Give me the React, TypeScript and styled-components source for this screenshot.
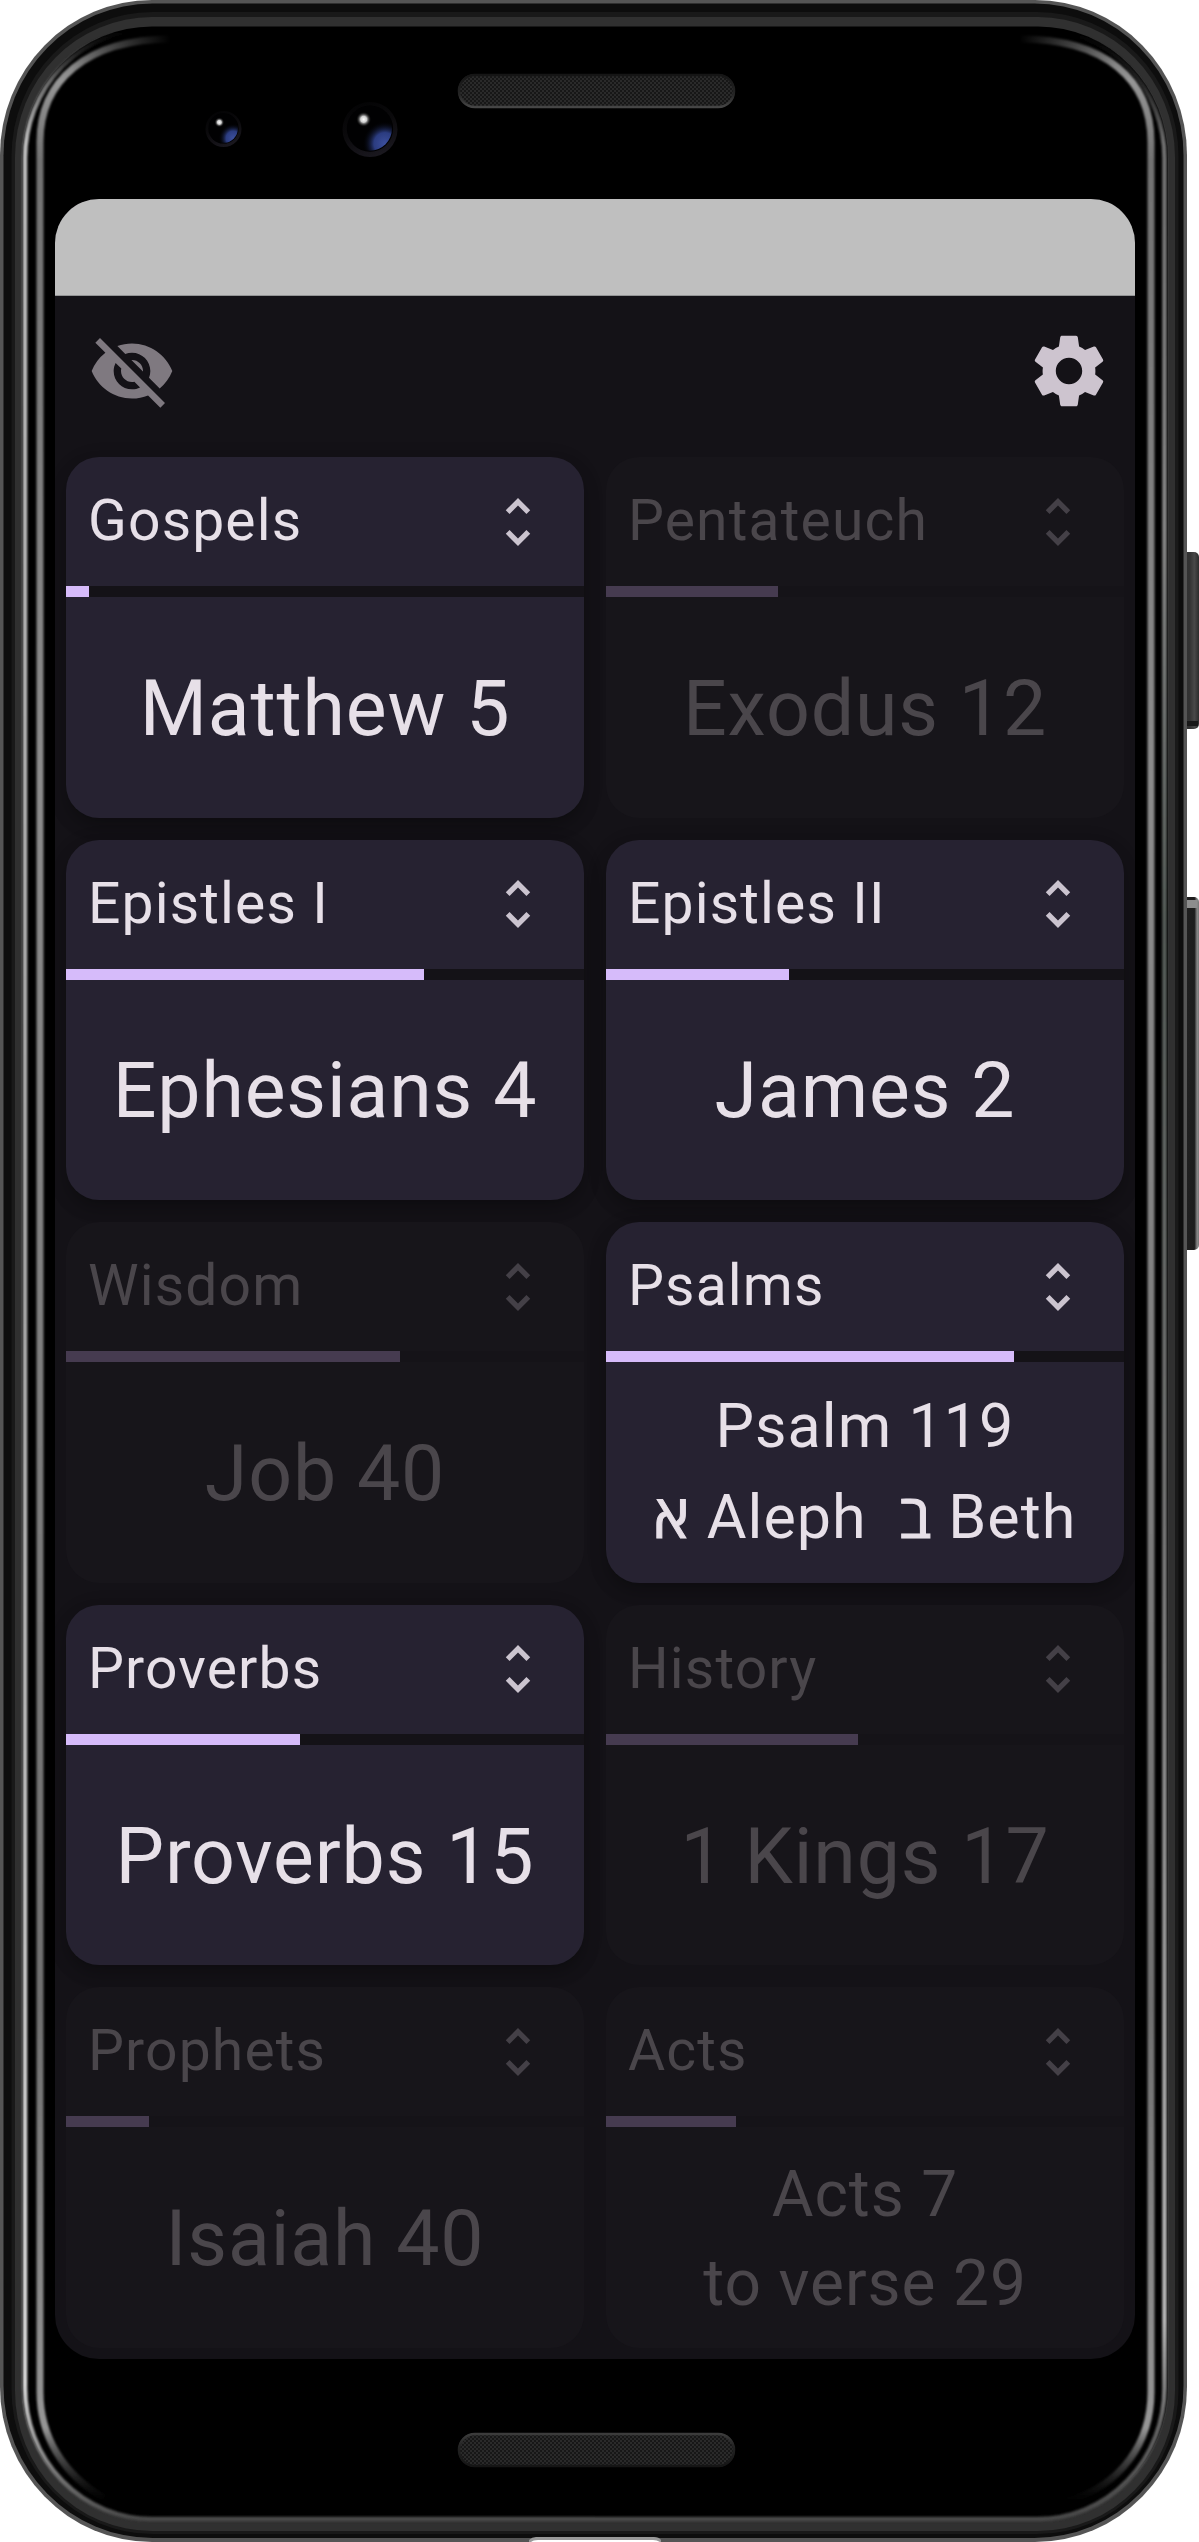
import React from "react";
import styled, { createGlobalStyle, css } from "styled-components";
import { MdSettings, MdUnfoldMore, MdVisibilityOff } from "react-icons/md";

const GlobalStyle = createGlobalStyle`
  html, body { margin: 0; padding: 0; background: #fff; }
  * { box-sizing: border-box; }
`;

const Device = styled.div`
  position: relative;
  width: 1199px;
  height: 2542px;
  padding: 199px 64px 183px 55px;
  overflow: hidden;
  font-family: Roboto, "Open Sans", "Liberation Sans", sans-serif;
`;

const Shell = styled.svg`
  position: absolute;
  inset: 0;
  width: 1199px;
  height: 2542px;
`;

const Screen = styled.main`
  position: relative;
  display: flex;
  flex-direction: column;
  width: 1080px;
  height: 2160px;
  border-radius: 44px;
  overflow: hidden;
  background: #141217;
`;

const StatusBar = styled.div`
  flex: none;
  height: 97px;
  background: #bfbfbf;
  border-bottom: 1px solid #939495;
`;

const AppBar = styled.header`
  flex: none;
  display: flex;
  align-items: center;
  justify-content: space-between;
  height: 150px;
  padding: 0 22px 0 33px;
`;

const IconButton = styled.button<{ $muted?: boolean }>`
  display: flex;
  padding: 0;
  border: 0;
  background: none;
  color: ${(p) => (p.$muted ? "#7f7980" : "#cdc4cf")};
  svg { width: 88px; height: 88px; }
`;

const Grid = styled.section`
  flex: 1;
  display: grid;
  grid-template-columns: 1fr 1fr;
  grid-template-rows: repeat(5, 1fr);
  gap: 22px;
  padding: 11px;
`;

const Card = styled.article<{ $done: boolean }>`
  display: flex;
  flex-direction: column;
  min-height: 0;
  border-radius: 33px;
  overflow: hidden;
  ${(p) =>
    p.$done
      ? css`
          background: #17151a;
          color: #4a464b;
          --icon: #444047;
          --bar: #463b50;
          --track: #151318;
        `
      : css`
          background: #262231;
          color: #e7e0e8;
          --icon: #cbc4cf;
          --bar: #d6bbfa;
          --track: #141217;
          box-shadow: 0 9px 16px rgba(0, 0, 0, 0.24), 0 4px 22px rgba(0, 0, 0, 0.1);
        `}
`;

const CardHeader = styled.div`
  flex: none;
  display: flex;
  align-items: center;
  justify-content: space-between;
  height: 129px;
  padding: 0 34px 0 22px;
  svg { width: 64px; height: 64px; color: var(--icon); }
`;

const CardTitle = styled.h2`
  margin: 0;
  padding-bottom: 1px;
  font-size: 57px;
  font-weight: 400;
  line-height: 84px;
  letter-spacing: 1.15px;
`;

const Track = styled.div`
  flex: none;
  height: 11px;
  background: var(--track);
`;

const Fill = styled.div`
  height: 100%;
  background: var(--bar);
`;

type ReadingSize = "large" | "medium" | "small";

const readingSizes = {
  large: css`
    padding-top: 3px;
    font-size: 77px;
    line-height: 116px;
    letter-spacing: 0.85px;
  `,
  medium: css`
    padding-top: 3px;
    font-size: 64px;
    line-height: 89px;
    letter-spacing: 0.9px;
  `,
  small: css`
    font-size: 61px;
    line-height: 91px;
    letter-spacing: 1.05px;
  `,
};

const Reading = styled.div<{ $size: ReadingSize }>`
  flex: 1;
  display: flex;
  flex-direction: column;
  align-items: center;
  justify-content: center;
  white-space: pre;
  ${(p) => readingSizes[p.$size]}
`;

const Line = styled.span`
  display: block;
`;

const Hebrew = styled.span`
  -webkit-text-stroke: 1px currentColor;
`;

type Plan = {
  title: string;
  lines: React.ReactNode[];
  progress: number;
  size?: ReadingSize;
  done?: boolean;
};

const plans: Plan[] = [
  { title: "Gospels", lines: ["Matthew 5"], progress: 0.045 },
  { title: "Pentateuch", lines: ["Exodus 12"], progress: 0.3316, done: true },
  { title: "Epistles I", lines: ["Ephesians 4"], progress: 0.692 },
  { title: "Epistles II", lines: ["James 2"], progress: 0.354 },
  { title: "Wisdom", lines: ["Job 40"], progress: 0.645, done: true },
  {
    title: "Psalms",
    lines: [
      "Psalm 119",
      <>
        <Hebrew>א</Hebrew> Aleph{"  "}
        <Hebrew>ב</Hebrew> Beth
      </>,
    ],
    progress: 0.7867,
    size: "small",
  },
  { title: "Proverbs", lines: ["Proverbs 15"], progress: 0.4516 },
  { title: "History", lines: ["1 Kings 17"], progress: 0.486, done: true },
  { title: "Prophets", lines: ["Isaiah 40"], progress: 0.16, done: true },
  { title: "Acts", lines: ["Acts 7", "to verse 29"], progress: 0.25, size: "medium", done: true },
];

function PlanCard({ plan }: { plan: Plan }) {
  return (
    <Card $done={!!plan.done}>
      <CardHeader>
        <CardTitle>{plan.title}</CardTitle>
        <MdUnfoldMore />
      </CardHeader>
      <Track>
        <Fill style={{ width: `${plan.progress * 100}%` }} />
      </Track>
      <Reading $size={plan.size ?? "large"}>
        {plan.lines.map((line, i) => (
          <Line key={i}>{line}</Line>
        ))}
      </Reading>
    </Card>
  );
}

function Lens({ cx, cy, r }: { cx: number; cy: number; r: number }) {
  return (
    <g>
      <circle cx={cx} cy={cy} r={r} fill="url(#ring)" />
      <circle cx={cx} cy={cy - r * 0.03} r={r * 0.84} fill="#010102" />
      <circle cx={cx} cy={cy - r * 0.03} r={r * 0.8} fill="url(#lens)" />
      <circle cx={cx - r * 0.23} cy={cy - r * 0.37} r={r * 0.28} fill="url(#glint)" />
    </g>
  );
}

function Phone() {
  return (
    <Shell viewBox="0 0 1199 2542" aria-hidden="true">
      <defs>
        <linearGradient id="ring" x1="0.2" y1="0" x2="0.6" y2="1">
          <stop offset="0" stopColor="#030304" />
          <stop offset="0.5" stopColor="#0b0a0c" />
          <stop offset="1" stopColor="#1a181f" />
        </linearGradient>
        <radialGradient id="lens" cx="0.84" cy="0.84" r="0.5">
          <stop offset="0" stopColor="#3c4f9c" />
          <stop offset="0.5" stopColor="#2b3c80" />
          <stop offset="1" stopColor="#05060c" stopOpacity="0" />
        </radialGradient>
        <radialGradient id="glint">
          <stop offset="0" stopColor="#fff" />
          <stop offset="0.4" stopColor="#ccc" />
          <stop offset="1" stopColor="#000" stopOpacity="0" />
        </radialGradient>
        <linearGradient id="rimL" gradientUnits="userSpaceOnUse" x1="0" y1="30" x2="0" y2="2520">
          <stop offset="0" stopColor="#333" stopOpacity="0" />
          <stop offset="0.02" stopColor="#666" />
          <stop offset="0.045" stopColor="#c0c0c0" />
          <stop offset="0.5" stopColor="#aaa" />
          <stop offset="0.945" stopColor="#ddd" />
          <stop offset="0.975" stopColor="#888" />
          <stop offset="1" stopColor="#484848" />
        </linearGradient>
        <linearGradient id="rimR" gradientUnits="userSpaceOnUse" x1="0" y1="30" x2="0" y2="2520">
          <stop offset="0" stopColor="#333" stopOpacity="0" />
          <stop offset="0.045" stopColor="#707070" />
          <stop offset="0.2" stopColor="#888" />
          <stop offset="0.36" stopColor="#555c58" />
          <stop offset="0.6" stopColor="#777" />
          <stop offset="0.92" stopColor="#bbb" />
          <stop offset="0.96" stopColor="#666" />
          <stop offset="1" stopColor="#484848" />
        </linearGradient>
        <linearGradient id="glass" gradientUnits="userSpaceOnUse" x1="0" y1="37" x2="0" y2="2502">
          <stop offset="0" stopColor="#6a6a6a" />
          <stop offset="0.018" stopColor="#969696" />
          <stop offset="0.05" stopColor="#727272" />
          <stop offset="0.3" stopColor="#8c8c8c" />
          <stop offset="0.8" stopColor="#707070" />
          <stop offset="0.97" stopColor="#969696" />
          <stop offset="1" stopColor="#444" stopOpacity="0" />
        </linearGradient>
        <linearGradient id="fadeX" gradientUnits="userSpaceOnUse" x1="0" y1="0" x2="1199" y2="0">
          <stop offset="0.06" stopColor="#fff" />
          <stop offset="0.105" stopColor="#777" />
          <stop offset="0.142" stopColor="#000" />
          <stop offset="0.85" stopColor="#000" />
          <stop offset="0.885" stopColor="#777" />
          <stop offset="0.93" stopColor="#fff" />
        </linearGradient>
        <mask id="glassMask" maskUnits="userSpaceOnUse" x="0" y="0" width="1199" height="2542">
          <rect width="1199" height="2542" fill="url(#fadeX)" />
        </mask>
        <linearGradient id="keyA" x1="0" x2="1">
          <stop offset="0" stopColor="#303030" />
          <stop offset="0.6" stopColor="#333" />
          <stop offset="0.8" stopColor="#484848" />
          <stop offset="1" stopColor="#2c2c2c" />
        </linearGradient>
        <linearGradient id="keyB" x1="0" x2="1">
          <stop offset="0" stopColor="#222" />
          <stop offset="0.8" stopColor="#1c1c1c" />
          <stop offset="0.92" stopColor="#8a8a8a" />
          <stop offset="1" stopColor="#777" />
        </linearGradient>
        <pattern id="mesh" width="4" height="4" patternUnits="userSpaceOnUse">
          <rect width="4" height="4" fill="#171717" />
          <rect width="2" height="2" fill="#2a2a2a" />
          <rect x="2" y="2" width="2" height="2" fill="#2a2a2a" />
        </pattern>
        <filter id="soft" filterUnits="userSpaceOnUse" x="0" y="0" width="1199" height="2542">
          <feGaussianBlur stdDeviation="1.2" />
        </filter>
        <linearGradient id="speakTop" x1="0" y1="0" x2="0" y2="1">
          <stop offset="0" stopColor="#151515" />
          <stop offset="0.6" stopColor="#242424" />
          <stop offset="1" stopColor="#464646" />
        </linearGradient>
        <linearGradient id="speakBottom" x1="0" y1="0" x2="0" y2="1">
          <stop offset="0" stopColor="#3c3c3c" />
          <stop offset="0.4" stopColor="#222" />
          <stop offset="1" stopColor="#151515" />
        </linearGradient>
      </defs>

      <rect x="1176" y="552" width="23" height="177" rx="5" fill="url(#keyA)" />
      <rect x="1187" y="721" width="11" height="5" fill="#181818" />
      <rect x="1176" y="897" width="23" height="353" rx="5" fill="url(#keyB)" />
      <rect x="1187" y="900" width="10" height="8" fill="#8d8d8d" />

      <rect x="0" y="0" width="1187" height="2542" rx="152" ry="155" fill="#555" />
      <rect x="3.5" y="3.5" width="1180" height="2534.5" rx="149" ry="152" fill="#0d0d0d" />
      <rect x="11.5" y="12" width="1167" height="2522" rx="141" ry="144" fill="#191919" />
      <rect x="15" y="17" width="1160" height="2514" rx="137" ry="140" fill="#303030" />
      <rect x="22" y="26.5" width="1146" height="2492" rx="130" ry="132" fill="#000" />

      <g fill="none" filter="url(#soft)">
        <path
          d="M152 28.500A127 129.500 0 0 0 25 158V2388A127 131 0 0 0 152 2519H595"
          stroke="url(#rimL)"
          strokeWidth="4.500"
        />
        <path
          d="M1038 28.500A126.500 129.500 0 0 1 1164.500 158V2388A126.500 131 0 0 1 1038 2519H595"
          stroke="url(#rimR)"
          strokeWidth="4.500"
        />
      </g>
      <g mask="url(#glassMask)">
        <g fill="none" filter="url(#soft)">
          <path
            d="M172 39C85 39 40 82 40 142V2392C40 2435 62 2474 104 2498"
            stroke="url(#glass)"
            strokeWidth="7"
          />
          <path
            d="M1020 39C1106 39 1151 80 1151 142V2392C1151 2442 1122 2485 1068 2501"
            stroke="url(#glass)"
            strokeWidth="7"
          />
        </g>
      </g>

      <rect x="458" y="74" width="277" height="34" rx="17" fill="url(#mesh)" />
      <rect x="459" y="75" width="275" height="32" rx="16" fill="none" stroke="url(#speakTop)" strokeWidth="2.500" />
      <rect x="458" y="2433" width="277" height="34" rx="17" fill="url(#mesh)" />
      <rect x="459" y="2434" width="275" height="32" rx="16" fill="none" stroke="url(#speakBottom)" strokeWidth="2.500" />

      <Lens cx={223.5} cy={129} r={18} />
      <Lens cx={370} cy={129.5} r={27.5} />

      <path d="M529 2542V2540Q532 2537 536 2537H654Q659 2537 661 2540V2542Z" fill="#999" />
      <path d="M531 2542Q533 2540 538 2540H653Q657 2540 660 2542Z" fill="#fff" />
    </Shell>
  );
}

export default function App() {
  return (
    <>
      <GlobalStyle />
      <Device>
        <Phone />
        <Screen>
          <StatusBar />
          <AppBar>
            <IconButton $muted aria-label="Hide completed">
              <MdVisibilityOff />
            </IconButton>
            <IconButton aria-label="Settings">
              <MdSettings />
            </IconButton>
          </AppBar>
          <Grid>
            {plans.map((plan) => (
              <PlanCard key={plan.title} plan={plan} />
            ))}
          </Grid>
        </Screen>
      </Device>
    </>
  );
}
